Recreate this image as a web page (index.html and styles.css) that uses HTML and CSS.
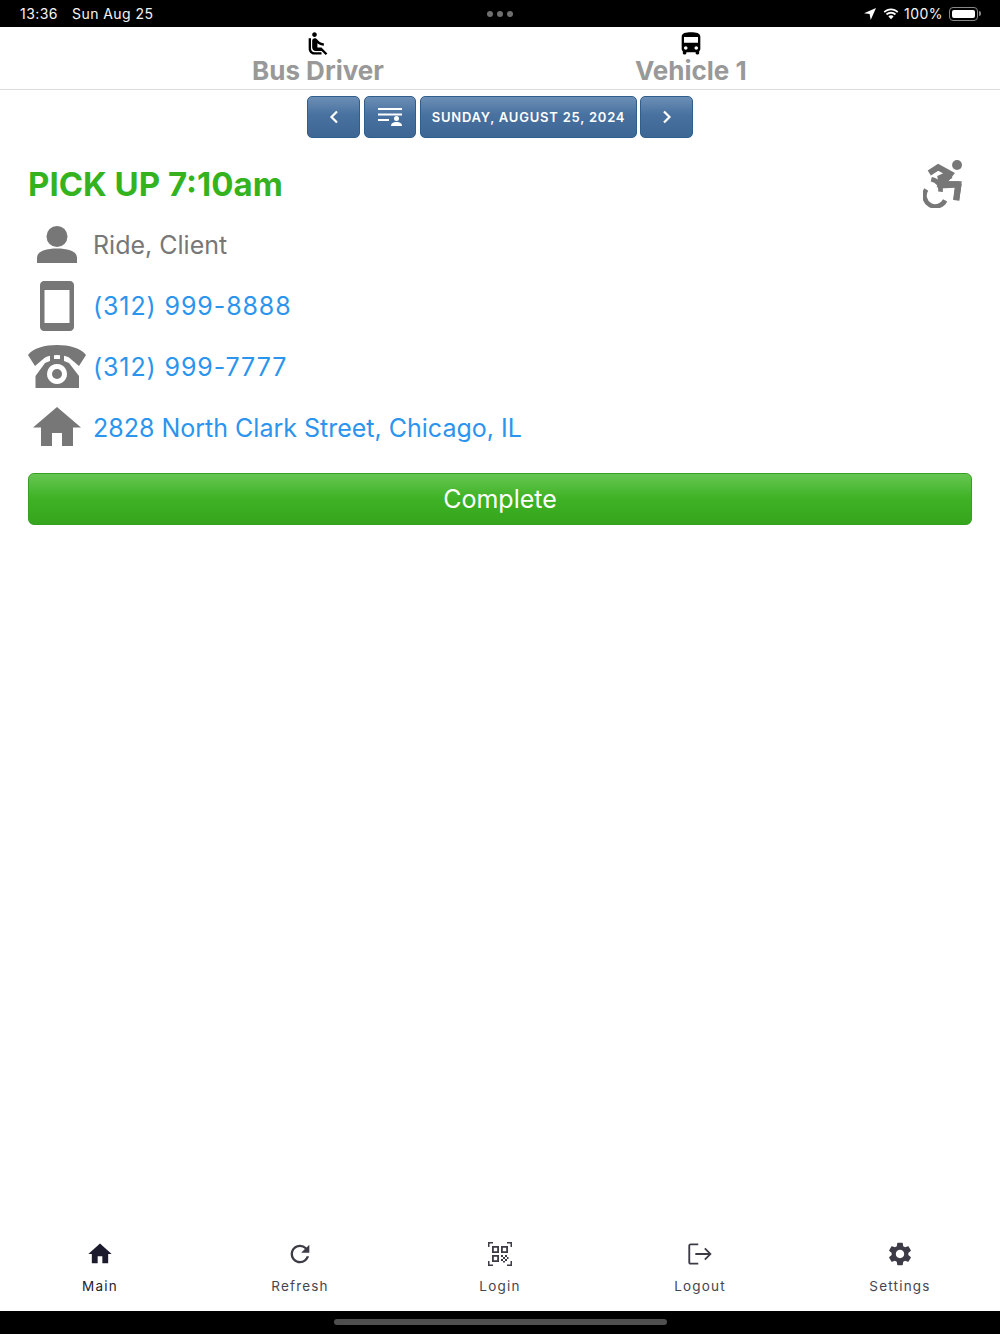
FILE: index.html
```html
<!DOCTYPE html>
<html lang="en">
<head>
    <meta charset="UTF-8">
    <meta name="viewport" content="width=device-width, initial-scale=1.0">
    <title>Bus Driver - Pick Up</title>
    <link rel="stylesheet" href="styles.css">
</head>
<body>
    <!-- Device status bar -->
    <div class="status-bar">
        <div class="status-left">
            <span>13:36</span>
            <span>Sun Aug 25</span>
        </div>
        <div class="status-dots"><i></i><i></i><i></i></div>
        <div class="status-right">
            <svg class="status-arrow" viewBox="0 0 12 12"><path d="M12 0 0 5.200l5.600.9L6.700 12z"/></svg>
            <svg class="status-wifi" viewBox="0 0 24 18"><path d="M12 3.500c3.500 0 6.700 1.300 9.200 3.600l1.800-2C19.900 2.200 16.100.6 12 .6S4.100 2.200 1 5.100l1.800 2C5.300 4.800 8.500 3.500 12 3.500zm0 5c2.200 0 4.200.8 5.700 2.200l1.900-2.100C17.500 6.700 14.900 5.600 12 5.600S6.500 6.700 4.400 8.600l1.900 2.100C7.800 9.300 9.800 8.500 12 8.500zm3.900 4.300C14.800 11.700 13.500 11 12 11s-2.800.7-3.900 1.800L12 17z"/></svg>
            <span class="status-pct">100%</span>
            <div class="battery"><div class="battery-fill"></div></div>
            <div class="battery-tip"></div>
        </div>
    </div>

    <!-- Driver and vehicle header -->
    <div class="top-header">
        <div class="header-item">
            <svg class="header-icon" viewBox="0 0 24 24"><path d="M7.590 5.410c-.78-.78-.78-2.050 0-2.830.78-.78 2.050-.78 2.830 0 .78.78.78 2.050 0 2.830-.79.79-2.050.79-2.830 0zM6 16V7H4v9c0 2.760 2.240 5 5 5h6v-2H9c-1.660 0-3-1.340-3-3zm14 4.070L14.930 15H11.500v-3.680c1.400 1.150 3.600 2.160 5.500 2.160v-2.160c-1.660.02-3.610-.87-4.670-2.040l-1.400-1.550c-.19-.21-.43-.38-.69-.5-.29-.14-.62-.23-.96-.23h-.03C8.010 7 7 8.010 7 9.250V15c0 1.660 1.340 3 3 3h5.070l3.500 3.500L20 20.070z"/></svg>
            <span class="header-label">Bus Driver</span>
        </div>
        <div class="header-item">
            <svg class="header-icon" viewBox="0 0 24 24"><path d="M4 16c0 .88.39 1.670 1 2.220V20c0 .55.45 1 1 1h1c.55 0 1-.45 1-1v-1h8v1c0 .55.45 1 1 1h1c.55 0 1-.45 1-1v-1.780c.61-.55 1-1.340 1-2.220V6c0-3.500-3.580-4-8-4s-8 .5-8 4v10zm3.500 1c-.83 0-1.500-.67-1.500-1.500S6.670 14 7.500 14s1.500.67 1.500 1.500S8.330 17 7.500 17zm9 0c-.83 0-1.500-.67-1.500-1.500s.67-1.500 1.500-1.500 1.500.67 1.500 1.500-.67 1.500-1.500 1.500zm1.500-6H6V6h12v5z"/></svg>
            <span class="header-label">Vehicle 1</span>
        </div>
    </div>

    <!-- Date navigation -->
    <div class="date-nav">
        <button class="nav-btn" type="button">
            <svg class="chevron" viewBox="0 0 10 14"><path d="M8 1.500 2.500 7 8 12.500"/></svg>
        </button>
        <button class="nav-btn list-btn" type="button">
            <svg class="list-icon" viewBox="0 0 24 18">
                <path d="M0 0h24v2H0zM0 5.500h24v2H0zM0 11h11v2H0z"/>
                <circle cx="18.500" cy="10.500" r="2.500"/>
                <path d="M13 18c0-3 2.500-4 5.500-4s5.500 1 5.500 4z"/>
            </svg>
        </button>
        <button class="nav-btn date-btn" type="button">SUNDAY, AUGUST 25, 2024</button>
        <button class="nav-btn next-btn" type="button">
            <svg class="chevron" viewBox="0 0 10 14"><path d="M2 1.500 7.500 7 2 12.500"/></svg>
        </button>
    </div>

    <!-- Trip details -->
    <div class="trip">
        <div class="trip-title">
            <h1>PICK UP 7:10am</h1>
            <svg class="access-icon" viewBox="69 30 121 145">
                <circle cx="172" cy="45" r="15"/>
                <path d="M112 78 148 62 158 84 138 94 178 94 186 104 178 152 160 150 165 114 118 116z"/>
                <path class="access-line" d="M88 69 115 52 152 72 128 103H176L170 152"/>
                <path class="access-line access-thin" d="M94 88C112 92 124 104 122 126"/>
                <path class="access-line access-thin" d="M79 119A33 33 0 1 0 136 152"/>
            </svg>
        </div>

        <div class="trip-row">
            <div class="row-icon">
                <svg class="icon-person" viewBox="0 0 40 37"><circle cx="20" cy="10.500" r="10.500"/><path d="M0 37v-5c0-7 9-9.500 20-9.500s20 2.500 20 9.500v5z"/></svg>
            </div>
            <span class="row-text">Ride, Client</span>
        </div>
        <div class="trip-row">
            <div class="row-icon">
                <svg class="icon-tablet" viewBox="0 0 34 50"><path fill-rule="evenodd" d="M4 0h26c2.200 0 4 1.800 4 4v42c0 2.200-1.800 4-4 4H4c-2.200 0-4-1.800-4-4V4c0-2.200 1.800-4 4-4zm.5 9v33h25V9z"/></svg>
            </div>
            <a class="row-link row-phone">(312) 999-8888</a>
        </div>
        <div class="trip-row">
            <div class="row-icon">
                <svg class="icon-phone" viewBox="0 0 58 43">
                    <path d="M0 10C5 3 17 0 29 0s24 3 29 10L51 21 41 12.500C36 9 22 9 17 12.500L7 21z"/>
                    <path fill-rule="evenodd" d="M22 9h4v5h6V9h4v7l5 2 10 13v12H7.500V31L17 18l5-2zm7 10a10 10 0 1 0 .01 0z"/>
                    <circle cx="29" cy="29" r="5"/>
                </svg>
            </div>
            <a class="row-link row-phone">(312) 999-7777</a>
        </div>
        <div class="trip-row">
            <div class="row-icon">
                <svg class="icon-house" viewBox="0 0 48 39"><path d="M24 0 48 20.500H40V39H29V26H19V39H8V20.500H0z"/></svg>
            </div>
            <a class="row-link">2828 North Clark Street, Chicago, IL</a>
        </div>

        <button class="complete-btn" type="button">Complete</button>
    </div>

    <!-- Bottom tabs -->
    <div class="tab-bar">
        <div class="tab tab-active">
            <svg class="tab-icon" viewBox="0 0 24 24"><path d="M10 20v-6h4v6h5v-8h3L12 3 2 12h3v8z"/></svg>
            <span>Main</span>
        </div>
        <div class="tab">
            <svg class="tab-icon" viewBox="0 0 24 24"><path d="M17.650 6.350A7.958 7.958 0 0 0 12 4c-4.420 0-7.990 3.580-7.990 8s3.570 8 7.990 8c3.730 0 6.840-2.550 7.730-6h-2.080A5.990 5.990 0 0 1 12 18c-3.310 0-6-2.690-6-6s2.690-6 6-6c1.660 0 3.140.69 4.220 1.780L13 11h7V4l-2.350 2.350z"/></svg>
            <span>Refresh</span>
        </div>
        <div class="tab">
            <svg class="tab-icon" viewBox="-2 -2 28 28">
                <path d="M0 0h5v1.500H1.500V5H0zM19 0h5v5h-1.500V1.500H19zM0 19h1.500v3.500H5V24H0zM22.500 19H24v5h-5v-1.500h3.500z"/>
                <path fill-rule="evenodd" d="M4 4h7v7H4zm1.800 1.800v3.400h3.400V5.800zM13 4h7v7h-7zm1.800 1.800v3.400h3.400V5.800zM4 13h7v7H4zm1.800 1.800v3.400h3.400v-3.400z"/>
                <path d="M13 13h2v2h-2zM17 13h2v2h-2zM15 15h2v2h-2zM19 15h1.500v2H19zM13 17h2v2h-2zM17 17h2v2h-2zM15 19h2v1.500h-2z"/>
            </svg>
            <span>Login</span>
        </div>
        <div class="tab">
            <svg class="tab-icon" viewBox="0 0 24 24"><path d="M4 3h6.500v1.600H3.600v14.800h6.900V21H4c-1.300 0-2-.8-2-2V5c0-1.200.7-2 2-2z"/><path d="M8 11.200h11l-3.400-3.400 1.100-1.100 5.300 5.300-5.300 5.300-1.100-1.100 3.400-3.400H8z"/></svg>
            <span>Logout</span>
        </div>
        <div class="tab">
            <svg class="tab-icon" viewBox="0 0 24 24"><path d="M19.140 12.940c.04-.3.060-.61.060-.94 0-.32-.02-.64-.07-.94l2.030-1.580c.18-.14.230-.41.120-.61l-1.920-3.320c-.12-.22-.37-.29-.59-.22l-2.390.96c-.5-.38-1.030-.7-1.620-.94L14.400 2.810c-.04-.24-.24-.41-.48-.41h-3.840c-.24 0-.43.170-.47.410L9.250 5.350c-.59.240-1.130.57-1.620.94l-2.390-.96c-.22-.08-.47 0-.59.22L2.740 8.870c-.12.210-.08.470.12.610l2.030 1.580c-.05.3-.09.630-.09.94s.02.640.07.94l-2.030 1.580c-.18.140-.23.410-.12.610l1.920 3.320c.12.220.37.290.59.220l2.390-.96c.5.38 1.030.7 1.620.94l.36 2.540c.05.240.24.410.48.410h3.840c.24 0 .44-.17.470-.41l.36-2.540c.59-.24 1.130-.56 1.620-.94l2.390.96c.22.080.47 0 .59-.22l1.920-3.320c.12-.22.070-.47-.12-.61l-2.010-1.580zM12 15.600c-1.980 0-3.600-1.620-3.600-3.600s1.620-3.600 3.600-3.600 3.600 1.620 3.600 3.600-1.620 3.600-3.600 3.600z"/></svg>
            <span>Settings</span>
        </div>
    </div>

    <div class="home-strip"><div class="home-indicator"></div></div>
</body>
</html>
```

FILE: styles.css
```css
/* Global */
* {
    margin: 0;
    padding: 0;
    box-sizing: border-box;
    font-family: 'Inter', 'Liberation Sans', sans-serif;
}

body {
    display: flex;
    flex-direction: column;
    height: 1334px;
    background: #fff;
    overflow: hidden;
}

/* Status bar */
.status-bar {
    position: relative;
    display: flex;
    justify-content: space-between;
    align-items: center;
    height: 27px;
    padding: 0 19px 0 20px;
    background: #000;
    color: #f4f4f4;
    font-size: 14px;
    letter-spacing: 0.45px;
}

.status-left {
    display: flex;
    gap: 14px;
}

.status-dots {
    position: absolute;
    left: 487px;
    top: 11px;
    display: flex;
    gap: 4px;
}

.status-dots i {
    width: 6px;
    height: 6px;
    border-radius: 50%;
    background: #6f6f6f;
}

.status-right {
    display: flex;
    align-items: center;
}

.status-right svg {
    fill: #fff;
}

.status-arrow {
    width: 12px;
    height: 12px;
    margin-right: 7px;
}

.status-wifi {
    width: 16px;
    height: 12px;
    margin-right: 5px;
}

.status-pct {
    margin-right: 6px;
}

.battery {
    width: 29px;
    height: 14px;
    padding: 2px;
    border: 1px solid #888;
    border-radius: 4px;
}

.battery-fill {
    height: 100%;
    background: #fff;
    border-radius: 2px;
}

.battery-tip {
    width: 2px;
    height: 5px;
    margin-left: 1px;
    background: #888;
    border-radius: 0 2px 2px 0;
}

/* Header */
.top-header {
    display: flex;
    gap: 251px;
    height: 63px;
    padding: 3px 0 0 252px;
    border-bottom: 1px solid #dcdcdc;
}

.header-item {
    display: flex;
    flex-direction: column;
    align-items: center;
}

.header-icon {
    width: 28px;
    height: 28px;
    margin-bottom: -2px;
    fill: #000;
}

.header-label {
    font-size: 26px;
    line-height: 30px;
    font-weight: 700;
    color: #999;
}

/* Date navigation */
.date-nav {
    display: flex;
    justify-content: center;
    gap: 4px;
    padding-top: 6px;
}

.nav-btn {
    display: flex;
    align-items: center;
    justify-content: center;
    width: 53px;
    height: 42px;
    border: 1px solid #2f5d8c;
    border-radius: 5px;
    background: linear-gradient(to bottom, #6c8fb6, #48719f 45%, #3d6694);
    color: #fff;
    font-size: 13px;
    font-weight: 600;
    letter-spacing: 0.78px;
}

.list-btn {
    width: 52px;
}

.date-btn {
    width: 217px;
}

.next-btn {
    margin-left: -1px;
}

.chevron {
    width: 10px;
    height: 14px;
    fill: none;
    stroke: #fff;
    stroke-width: 2.200;
}

.list-icon {
    width: 24px;
    height: 18px;
    fill: #fff;
}

/* Trip details */
.trip {
    flex: 1;
    padding: 0 28px;
}

.trip-title {
    display: flex;
    justify-content: space-between;
    align-items: center;
    height: 76px;
    padding-top: 16px;
}

.trip-title h1 {
    font-size: 33px;
    font-weight: 700;
    color: #35b31f;
}

.access-icon {
    width: 40px;
    height: 48px;
    margin-right: 9px;
    fill: #777;
}

.access-line {
    fill: none;
    stroke: #777;
    stroke-width: 18;
}

.access-thin {
    stroke-width: 14;
}

.trip-row {
    display: flex;
    align-items: center;
    gap: 7px;
    height: 61px;
}

.row-icon {
    display: flex;
    justify-content: center;
    width: 58px;
}

.row-icon svg {
    fill: #777;
}

.icon-person {
    width: 40px;
    height: 37px;
}

.icon-tablet {
    width: 34px;
    height: 50px;
}

.icon-phone {
    width: 58px;
    height: 43px;
}

.icon-house {
    width: 48px;
    height: 39px;
    margin-bottom: 3px;
}

.row-text,
.row-link {
    font-size: 25px;
}

.row-text {
    color: #777;
}

.row-link {
    color: #2b95ee;
}

.row-phone {
    letter-spacing: 0.9px;
}

.complete-btn {
    display: block;
    width: 100%;
    height: 52px;
    margin-top: 15px;
    border: 1px solid #37a020;
    border-radius: 6px;
    background: linear-gradient(to bottom, #66c653, #3eb224 50%, #35a51d);
    color: #fff;
    font-size: 25px;
}

/* Bottom tabs */
.tab-bar {
    display: flex;
    height: 84px;
}

.tab {
    display: flex;
    flex: 1;
    flex-direction: column;
    align-items: center;
    padding-top: 13px;
    color: #46454f;
    font-size: 13.500px;
    letter-spacing: 1.2px;
}

.tab-icon {
    width: 28px;
    height: 28px;
    margin-bottom: 10px;
    fill: #3c3b46;
}

.tab-active {
    color: #24232f;
}

.tab-active .tab-icon {
    fill: #1c1b2e;
}

.home-strip {
    display: flex;
    justify-content: center;
    height: 23px;
    padding-top: 8px;
    background: #000;
}

.home-indicator {
    width: 333px;
    height: 6px;
    border-radius: 3px;
    background: #4f4f4f;
}
```
